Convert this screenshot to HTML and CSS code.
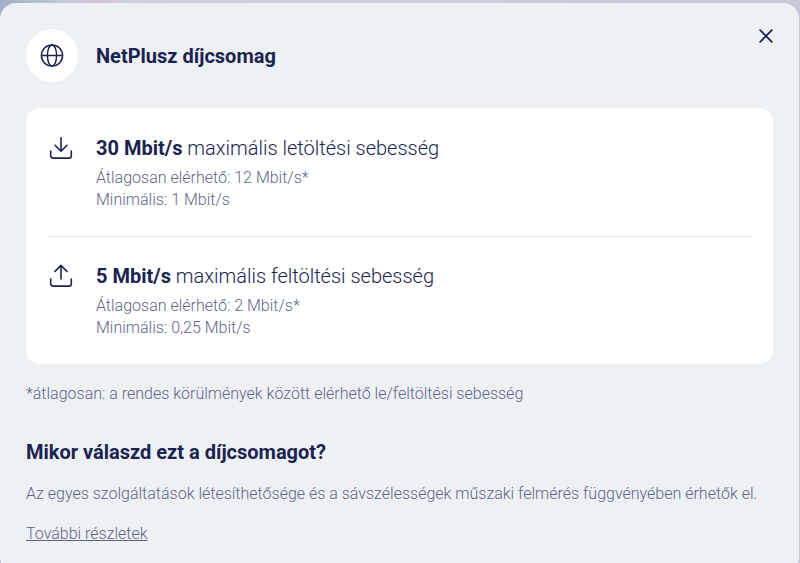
FILE: index.html
```html
<!DOCTYPE html>
<html lang="hu">
<head>
    <meta charset="UTF-8">
    <meta name="viewport" content="width=device-width, initial-scale=1.0">
    <title>NetPlusz díjcsomag</title>
    <link rel="stylesheet" href="styles.css">
</head>
<body>

<div class="modal" role="dialog" aria-labelledby="modalTitle">
    <div class="modal-header">
        <span class="round-icon">
            <svg width="24" height="24" viewBox="0 0 24 24" fill="none" stroke="currentColor" stroke-width="1.5">
                <circle cx="12" cy="11.5" r="10.6"/>
                <ellipse cx="12" cy="11.5" rx="4.6" ry="10.6"/>
                <path d="M1.4 11.5h21.2"/>
            </svg>
        </span>
        <h1 id="modalTitle">NetPlusz díjcsomag</h1>
        <button type="button" class="close" aria-label="Bezárás">
            <svg width="14" height="14" viewBox="0 0 14 14" fill="none" stroke="currentColor" stroke-width="1.8" stroke-linecap="round">
                <path d="M1.2 1.2l11.6 11.6M12.8 1.2L1.2 12.8"/>
            </svg>
        </button>
    </div>

    <ul class="speeds">
        <li>
            <svg class="speed-icon" width="24" height="24" viewBox="0 0 24 24" fill="none" stroke="currentColor" stroke-width="1.6" stroke-linecap="round" stroke-linejoin="round">
                <path d="M12 1.8v13M6 9.2l6 6 6-6"/>
                <path d="M1.7 15v4.7a2.4 2.4 0 0 0 2.4 2.4h15.8a2.4 2.4 0 0 0 2.4-2.4V15"/>
            </svg>
            <div>
                <p class="speed-max"><strong>30 Mbit/s</strong> maximális letöltési sebesség</p>
                <p>Átlagosan elérhető: 12 Mbit/s*</p>
                <p>Minimális: 1 Mbit/s</p>
            </div>
        </li>
        <li>
            <svg class="speed-icon" width="24" height="24" viewBox="0 0 24 24" fill="none" stroke="currentColor" stroke-width="1.6" stroke-linecap="round" stroke-linejoin="round">
                <path d="M12 15V1.8M6 7.4l6-6 6 6"/>
                <path d="M1.7 15v4.7a2.4 2.4 0 0 0 2.4 2.4h15.8a2.4 2.4 0 0 0 2.4-2.4V15"/>
            </svg>
            <div>
                <p class="speed-max"><strong>5 Mbit/s</strong> maximális feltöltési sebesség</p>
                <p>Átlagosan elérhető: 2 Mbit/s*</p>
                <p>Minimális: 0,25 Mbit/s</p>
            </div>
        </li>
    </ul>

    <p>*átlagosan: a rendes körülmények között elérhető le/feltöltési sebesség</p>

    <h2>Mikor válaszd ezt a díjcsomagot?</h2>
    <p>Az egyes szolgáltatások létesíthetősége és a sávszélességek műszaki felmérés függvényében érhetők el.</p>
    <a href="#">További részletek</a>
</div>

</body>
</html>
```
FILE: styles.css
```css
* {
    box-sizing: border-box;
}
body {
    margin: 0;
    padding: 3px 1px 0 0;
    min-height: 100vh;
    overflow: hidden;
    font-family: Roboto, 'Liberation Sans', sans-serif;
    font-size: 16px;
    font-weight: 320;
    line-height: 22px;
    color: #5f658a;
    background: linear-gradient(90deg, #a3afc6 0, #c3cbda 70px, #d3bfd2 96px, #cdd1dc 130px, #c5c9d5 100%);
}
h1, h2, p, ul {
    margin: 0;
    padding: 0;
}
h1, h2 {
    font-size: 20px;
    line-height: 30px;
    color: #1b2350;
}
strong {
    font-weight: 700;
}
.modal {
    background-color: #edf1f4;
    border-radius: 16px;
    padding: 26px 26px 28px;
}
.modal-header {
    display: flex;
    align-items: center;
    gap: 18px;
    color: #1b2350;
    margin-bottom: 26px;
}
.round-icon {
    display: flex;
    align-items: center;
    justify-content: center;
    width: 52px;
    height: 53px;
    border-radius: 50%;
    background-color: white;
}
.close {
    display: flex;
    align-self: flex-start;
    margin-left: auto;
    padding: 0;
    border: none;
    background: none;
    color: inherit;
    cursor: pointer;
}
.speeds {
    list-style: none;
    background-color: white;
    border-radius: 14px;
    padding: 0 22px;
    margin-bottom: 19px;
}
.speeds li {
    display: flex;
    gap: 23px;
    padding: 24px 0 25px;
    border-top: 1px solid transparent;
}
.speeds li + li {
    border-top-color: #e2e4ea;
}
.speed-icon {
    margin: 3px 0 0 1px;
    color: #1b2350;
}
.speed-max {
    font-size: 20px;
    line-height: 30px;
    margin-bottom: 4px;
    color: #1b2350;
}
h2 {
    margin: 32px 0 16px;
}
a {
    display: inline-block;
    margin-top: 18px;
    color: inherit;
}
```
